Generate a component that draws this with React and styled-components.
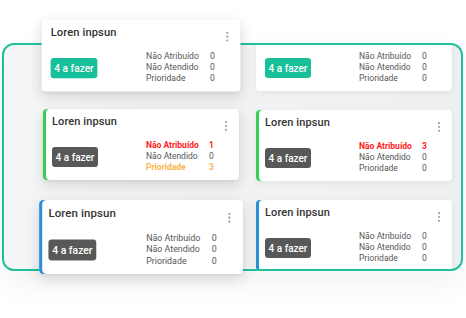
import React from 'react';
import styled, { createGlobalStyle } from 'styled-components';

const Global = createGlobalStyle`
  html, body { margin: 0; padding: 0; background: #ffffff; }
  body { font-family: Roboto, "Noto Sans", Arial, sans-serif; -webkit-font-smoothing: antialiased; }
`;

const Stage = styled.div`
  display: grid;
  grid-template-columns: 1fr;
  grid-template-rows: 1fr;
  width: 466px;
  height: 318px;
  overflow: hidden;
  background: #fff;
`;

const Frame = styled.div`
  grid-area: 1 / 1;
  align-self: start;
  margin: 43px 3px 0 2px;
  height: 228px;
  box-sizing: border-box;
  border: 2px solid #1fc09c;
  border-radius: 12px;
  background: linear-gradient(90deg, #f4f5f6 0%, #eeeff0 100%);
  box-shadow: 0 12px 30px rgba(0, 0, 0, 0.05);
  overflow: hidden;
  display: flex;
  flex-direction: column;
  align-items: flex-end;
  gap: 19px;
  padding: 0 9px 0 0;
`;

const FrameInner = styled.div`
  display: flex;
  flex-direction: column;
  gap: 19px;
  margin-top: -25px;
`;

const LeftColumn = styled.div`
  grid-area: 1 / 1;
  z-index: 1;
  align-self: start;
  justify-self: start;
  padding: 20px 0 0 43px;
  display: flex;
  flex-direction: column;
  gap: 19px;
`;

const Card = styled.div`
  width: 196px;
  height: 71px;
  box-sizing: border-box;
  background: #ffffff;
  border-radius: 4px;
  padding: 5px 9px 0 9px;
  display: grid;
  grid-template-rows: 16px 1fr;
  transform: translateY(${(p) => p.$shift || 0}px) scale(${(p) => p.$scale || 1});
  box-shadow: ${(p) => (p.$accent ? `inset 3px 0 0 ${p.$accent}, ` : '')}${(p) =>
    p.$raised
      ? '0 5px 14px rgba(0, 0, 0, 0.13), 0 1px 3px rgba(0, 0, 0, 0.06)'
      : '0 2px 6px rgba(0, 0, 0, 0.06)'};
`;

const Header = styled.div`
  display: flex;
  justify-content: space-between;
  align-items: center;
`;

const Title = styled.div`
  font-size: 11px;
  font-weight: 500;
  color: #333333;
  line-height: 16px;
  letter-spacing: 0.1px;
`;

const Kebab = styled.svg`
  align-self: flex-end;
  margin-bottom: -1px;
  margin-right: 1px;
`;

const Body = styled.div`
  display: grid;
  grid-template-columns: 94px auto;
  align-items: start;
`;

const Badge = styled.div`
  margin-top: 17px;
  width: 46px;
  height: 20px;
  border-radius: 3px;
  background: ${(p) => (p.$teal ? '#16c09a' : '#585858')};
  color: #ffffff;
  font-size: 10px;
  font-weight: 500;
  display: flex;
  align-items: center;
  justify-content: center;
`;

const Stats = styled.div`
  margin-top: 10px;
  display: grid;
  grid-template-columns: 63px auto;
  grid-auto-rows: 11px;
  font-size: 8.5px;
  line-height: 11px;
`;

const toneColor = { red: '#ff1c1c', orange: '#f8b74a' };

const Cell = styled.span`
  color: ${(p) => toneColor[p.$tone] || '#565656'};
  font-weight: ${(p) => (p.$tone ? 700 : 400)};
  white-space: nowrap;
`;

const labels = ['Não Atribuído', 'Não Atendido', 'Prioridade'];

function TaskCard({ accent, teal, stats, scale, shift, raised }) {
  return (
    <Card $accent={accent} $scale={scale} $shift={shift} $raised={raised}>
      <Header>
        <Title>Loren inpsun</Title>
        <Kebab width="6" height="10" viewBox="0 0 6 10">
          <circle cx="3" cy="1.2" r="1.1" fill="#a3a3a3" />
          <circle cx="3" cy="5" r="1.1" fill="#a3a3a3" />
          <circle cx="3" cy="8.8" r="1.1" fill="#a3a3a3" />
        </Kebab>
      </Header>
      <Body>
        <Badge $teal={teal}>4 a fazer</Badge>
        <Stats>
          {labels.map((l, i) => (
            <React.Fragment key={l}>
              <Cell $tone={stats[i].tone}>{l}</Cell>
              <Cell $tone={stats[i].tone}>{stats[i].v}</Cell>
            </React.Fragment>
          ))}
        </Stats>
      </Body>
    </Card>
  );
}

const GREEN = '#35cf57';
const BLUE = '#2b8fd6';
const zero = [{ v: 0 }, { v: 0 }, { v: 0 }];

export default function App() {
  return (
    <>
      <Global />
      <Stage>
        <Frame>
          <FrameInner>
            <TaskCard teal stats={zero} />
            <TaskCard accent={GREEN} stats={[{ v: 3, tone: 'red' }, { v: 0 }, { v: 0 }]} />
            <TaskCard accent={BLUE} stats={zero} />
          </FrameInner>
        </Frame>
        <LeftColumn>
          <TaskCard raised teal stats={zero} scale={1.015} />
          <TaskCard raised accent={GREEN} stats={[{ v: 1, tone: 'red' }, { v: 0 }, { v: 3, tone: 'orange' }]} shift={-1} />
          <TaskCard raised accent={BLUE} stats={zero} scale={1.04} shift={1.5} />
        </LeftColumn>
      </Stage>
    </>
  );
}
